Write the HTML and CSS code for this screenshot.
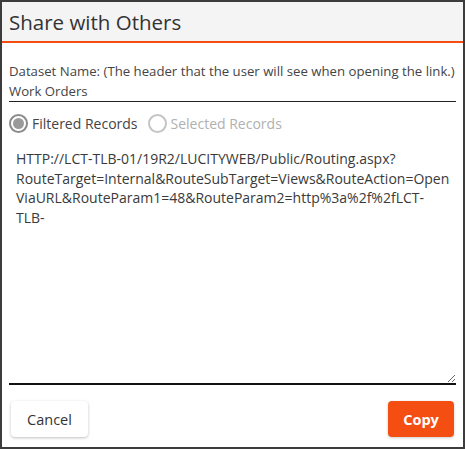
FILE: index.html
```html
<!DOCTYPE html>
<html>
<head>
  <title>Share with Others</title>
  <meta name="viewport" content="width=device-width, initial-scale=1.0">
  <link rel="stylesheet" href="styles.css">
</head>
<body>
  <div class="dialog">
    <!-- Header -->
    <div class="dialog-header">Share with Others</div>

    <div class="dialog-body">
      <div class="field">
        <label class="field-label">Dataset Name: (The header that the user will see when opening the link.)</label>
        <input type="text" class="field-input" value="Work Orders">
      </div>

      <div class="radio-row">
        <label class="radio checked">
          <span class="radio-circle"></span>
          <span class="radio-text">Filtered Records</span>
        </label>
        <label class="radio disabled">
          <span class="radio-circle"></span>
          <span class="radio-text">Selected Records</span>
        </label>
      </div>

      <textarea class="link-box">HTTP://LCT-TLB-01/19R2/LUCITYWEB/Public/Routing.aspx?RouteTarget=Internal&amp;RouteSubTarget=Views&amp;RouteAction=OpenViaURL&amp;RouteParam1=48&amp;RouteParam2=http%3a%2f%2fLCT-TLB-</textarea>
    </div>

    <!-- Footer -->
    <div class="dialog-footer">
      <button class="btn btn-cancel">Cancel</button>
      <button class="btn btn-copy">Copy</button>
    </div>
  </div>
</body>
</html>
```

FILE: styles.css
```css
:root {
  --orange: #f44e12;
  --text: #333;
  --border: #3c3c3c;
}

* {
  box-sizing: border-box;
}

body, html {
  margin: 0;
  padding: 0;
  height: 100%;
  font-family: 'Open Sans', 'Noto Sans', sans-serif;
  color: var(--text);
  background: #fff;
}

.dialog {
  width: 465px;
  height: 449px;
  border: 2px solid var(--border);
  display: flex;
  flex-direction: column;
  background: #fff;
}

/* Header */
.dialog-header {
  height: 41px;
  padding: 0 7px;
  background: #f4f4f4;
  border-bottom: 2px solid var(--orange);
  font-size: 20.5px;
  line-height: 40px;
  color: #333;
}

/* Body */
.dialog-body {
  flex: 1;
  display: flex;
  flex-direction: column;
  padding: 18px 7px 0;
}

.field-label {
  display: block;
  font-size: 13.2px;
  line-height: 20px;
  color: #444;
}

.field-input {
  display: block;
  width: 100%;
  height: 21px;
  padding: 0;
  border: none;
  border-bottom: 1px solid #222;
  font-family: inherit;
  font-size: 13.2px;
  color: #444;
  outline: none;
}

.radio-row {
  display: flex;
  align-items: center;
  gap: 10px;
  margin-top: 11px;
  height: 20px;
}

.radio {
  display: flex;
  align-items: center;
  gap: 4px;
  font-size: 14px;
  color: #444;
}

.radio-circle {
  width: 19px;
  height: 19px;
  border-radius: 50%;
  border: 2px solid #8a8a8a;
  display: flex;
  align-items: center;
  justify-content: center;
}

.radio.checked .radio-circle::after {
  content: "";
  width: 11px;
  height: 11px;
  border-radius: 50%;
  background: #9a9a9a;
}

.radio.disabled .radio-circle {
  border-color: #c4c4c4;
}

.radio.disabled .radio-text {
  color: #b0b0b0;
}

.link-box {
  display: block;
  width: 100%;
  height: 241px;
  margin-top: 11px;
  padding: 5px 5px 5px 7px;
  border: none;
  border-bottom: 2px solid #111;
  font-family: inherit;
  font-size: 14px;
  line-height: 19.5px;
  color: #3a3a3a;
  outline: none;
  resize: vertical;
}

/* Footer */
.dialog-footer {
  display: flex;
  justify-content: space-between;
  padding: 0 9px 10px 9px;
}

.btn {
  height: 36px;
  border: none;
  border-radius: 4px;
  font-family: inherit;
  font-size: 14.5px;
  cursor: pointer;
}

.btn-cancel {
  width: 77px;
  background: #fff;
  color: #333;
  box-shadow: 0 1px 3px rgba(0, 0, 0, 0.25);
}

.btn-copy {
  width: 66px;
  background: var(--orange);
  color: #fff;
  font-weight: bold;
  box-shadow: 0 1px 3px rgba(0, 0, 0, 0.2);
}
```
